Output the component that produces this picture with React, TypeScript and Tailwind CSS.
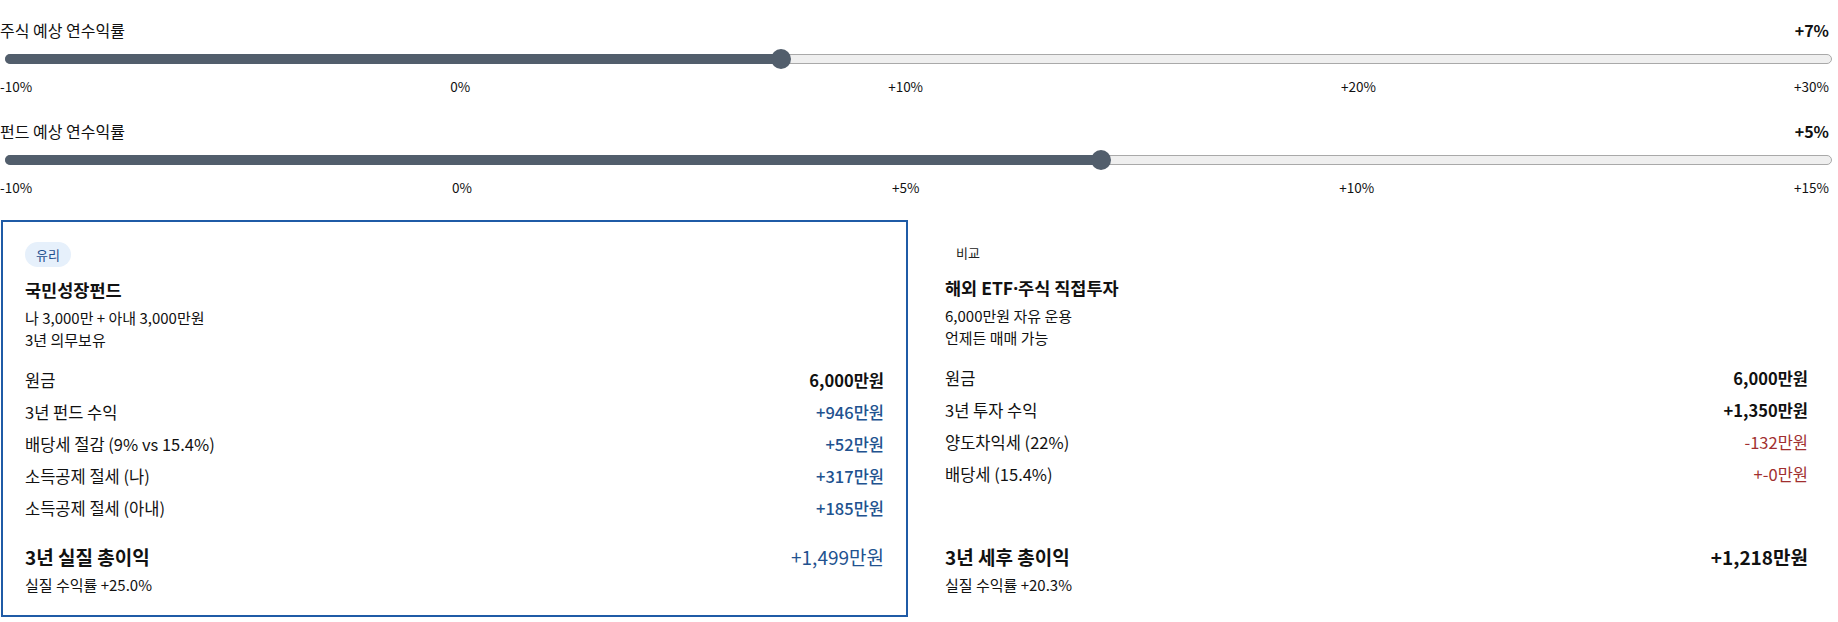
import React from 'react'

interface SliderProps {
  label: string
  value: number
  min: number
  max: number
  ticks: string[]
}

function RateSlider({ label, value, min, max, ticks }: SliderProps) {
  const pct = ((value - min) / (max - min)) * 100
  return (
    <div>
      <div className="flex h-[22px] items-center justify-between pr-[3px]">
        <span className="text-[16px]">{label}</span>
        <span className="text-[16px] font-bold">+{value}%</span>
      </div>
      {/* track + thumb */}
      <div className="relative mt-2 ml-[5px] flex h-5 items-center">
        <div className="relative h-[10px] w-full rounded-full border border-[#a9a9a9] bg-[#efefef]">
          <div
            className="absolute -top-px -bottom-px -left-px rounded-l-full bg-[#525e6c]"
            style={{ width: `calc(${pct}% + 1px)` }}
          />
        </div>
        <div
          className="absolute top-0 h-5 w-5 rounded-full bg-[#525e6c]"
          style={{ left: `calc(${pct}% - 10px)` }}
        />
      </div>
      <div className="mt-2 flex justify-between pr-[3px] text-[13.5px] leading-[18px]">
        {ticks.map((t) => (
          <span key={t}>{t}</span>
        ))}
      </div>
    </div>
  )
}

type Tone = 'plain' | 'strong' | 'blue' | 'red'

interface Row {
  label: string
  value: string
  tone: Tone
}

const toneClass: Record<Tone, string> = {
  plain: 'text-[#111] font-medium',
  strong: 'text-[#111] font-bold',
  blue: 'text-[#22528f] font-medium',
  red: 'text-[#a12f2f]',
}

interface PlanCardProps {
  badge: string
  highlight?: boolean
  title: React.ReactNode
  lines: string[]
  rows: Row[]
  totalLabel: string
  totalValue: string
  totalTone: Tone
  rate: string
}

function PlanCard({ badge, highlight, title, lines, rows, totalLabel, totalValue, totalTone, rate }: PlanCardProps) {
  return (
    <div
      className={
        highlight
          ? 'flex flex-col border-2 border-[#1f5ba6] px-[22px] pt-5 pb-5'
          : 'flex flex-col px-[22px] pt-5 pb-[22px]'
      }
    >
      <span
        className={
          highlight
            ? 'flex h-[25px] self-start items-center rounded-full bg-[#e6f0fb] px-[11px] text-[13px] text-[#1f4f8f]'
            : 'flex h-[25px] self-start items-center rounded-full px-[11px] text-[13px] text-[#222]'
        }
      >
        {badge}
      </span>
      <h3 className="mt-[11px] text-[17.5px] leading-6 font-bold">{title}</h3>
      <div className="mt-[5px] text-[15px] leading-[22px]">
        {lines.map((l) => (
          <p key={l}>{l}</p>
        ))}
      </div>
      <div className="mt-[13px]">
        {rows.map((r) => (
          <div key={r.label} className="flex h-8 items-center justify-between text-[16.5px]">
            <span>{r.label}</span>
            <span className={toneClass[r.tone]}>{r.value}</span>
          </div>
        ))}
      </div>
      <div className="mt-auto pt-5">
        <div className="flex h-[26px] items-center justify-between">
          <span className="text-[19px] font-bold">{totalLabel}</span>
          <span className={totalTone === 'blue' ? 'text-[19px] text-[#22528f]' : 'text-[19px] font-bold text-[#111]'}>
            {totalValue}
          </span>
        </div>
        <p className="mt-[5px] text-[15px] leading-5">{rate}</p>
      </div>
    </div>
  )
}

export default function App() {
  return (
    <div className="w-[1832px] bg-white pt-[19px] font-['Noto_Sans_CJK_KR',sans-serif] text-[#111]">
      <RateSlider label="주식 예상 연수익률" value={7} min={-10} max={30} ticks={['-10%', '0%', '+10%', '+20%', '+30%']} />
      <div className="mt-[25px]">
        <RateSlider label="펀드 예상 연수익률" value={5} min={-10} max={15} ticks={['-10%', '0%', '+5%', '+10%', '+15%']} />
      </div>

      <div className="mt-6 grid w-[1830px] grid-cols-2 gap-[15px] pl-px">
        <PlanCard
          highlight
          badge="유리"
          title="국민성장펀드"
          lines={['나 3,000만 + 아내 3,000만원', '3년 의무보유']}
          rows={[
            { label: '원금', value: '6,000만원', tone: 'strong' },
            { label: '3년 펀드 수익', value: '+946만원', tone: 'blue' },
            { label: '배당세 절감 (9% vs 15.4%)', value: '+52만원', tone: 'blue' },
            { label: '소득공제 절세 (나)', value: '+317만원', tone: 'blue' },
            { label: '소득공제 절세 (아내)', value: '+185만원', tone: 'blue' },
          ]}
          totalLabel="3년 실질 총이익"
          totalValue="+1,499만원"
          totalTone="blue"
          rate="실질 수익률 +25.0%"
        />
        <PlanCard
          badge="비교"
          title={
            <>
              해외 ETF<span className="font-['Noto_Sans',sans-serif]">·</span>주식 직접투자
            </>
          }
          lines={['6,000만원 자유 운용', '언제든 매매 가능']}
          rows={[
            { label: '원금', value: '6,000만원', tone: 'strong' },
            { label: '3년 투자 수익', value: '+1,350만원', tone: 'strong' },
            { label: '양도차익세 (22%)', value: '-132만원', tone: 'red' },
            { label: '배당세 (15.4%)', value: '+-0만원', tone: 'red' },
          ]}
          totalLabel="3년 세후 총이익"
          totalValue="+1,218만원"
          totalTone="plain"
          rate="실질 수익률 +20.3%"
        />
      </div>
    </div>
  )
}
